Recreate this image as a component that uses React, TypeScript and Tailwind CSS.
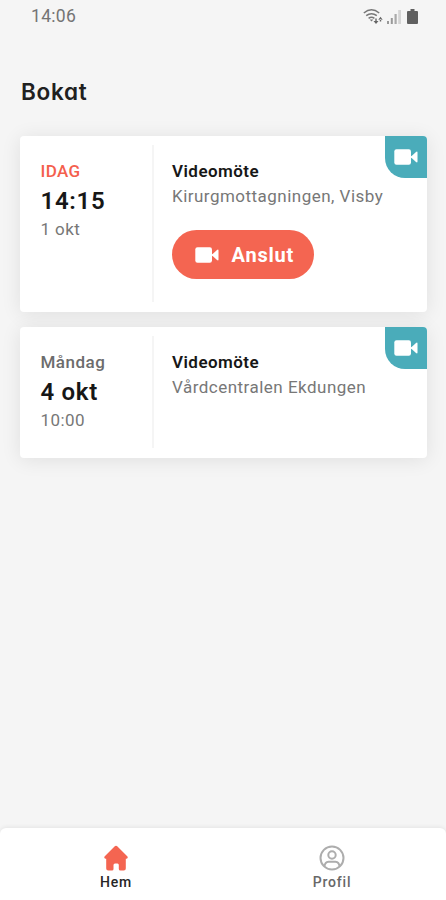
import type { ReactNode } from "react";

function CameraIcon() {
  return (
    <svg viewBox="0 0 24 16" className="h-4 w-6 shrink-0" fill="currentColor">
      <rect x="0.3" y="0.3" width="16.7" height="15.4" rx="2.2" />
      <path d="M17 7.300 18.200 6.500 22 2.900Q23.500 2 23.500 3.500V12.500Q23.500 14 22 13.100L18.200 9.500 17 8.700Z" />
    </svg>
  );
}

function StatusBar() {
  return (
    <div className="flex h-8 items-center justify-between pr-[28px] pl-[31px] text-[#747474]">
      <span className="text-[17.5px] leading-8 tracking-[0.3px]">14:06</span>
      <div className="flex items-center">
        <svg viewBox="0 0 20 17" className="h-[17px] w-5" fill="none" stroke="#777" strokeWidth="1.5">
          <path d="M.8 5Q8.500-1.400 16.200 5M3.200 7.700Q8.500 3.600 13.800 7.700M5.600 10.300Q8.500 8 11.400 10.300" />
          <path d="M6.700 11.500H10.300L8.500 13.500Z" fill="#777" stroke="none" />
          <path d="M10.500 13H15.500L13 16ZM15.300 11.800H19.700L17.500 8.800ZM12.300 10.500H13.700V14H12.300ZM16.800 11H18.200V13.500H16.800Z" fill="#666" stroke="none" />
        </svg>
        <svg viewBox="0 0 15 15" className="ml-[4px] h-[15px] w-[15px]">
          <path d="M0 12h2v3H0ZM3.800 9h2v6h-2Z" fill="#999" />
          <path d="M7.500 5h2.200v10H7.500Z" fill="#aaa" />
          <path d="M11.200 1h2.800v14h-2.800Z" fill="#d5d5d5" />
        </svg>
        <svg viewBox="0 0 11 15" className="ml-[5px] h-[15px] w-[11px]" fill="#606060">
          <path d="M3.500 0h4v2H10q1 0 1 1v11q0 1-1 1H1q-1 0-1-1V3q0-1 1-1h2.500Z" />
        </svg>
      </div>
    </div>
  );
}

type BookingProps = {
  label: string;
  labelClass: string;
  main: string;
  sub: string;
  place: string;
  className: string;
  children?: ReactNode;
};

function Booking({ label, labelClass, main, sub, place, className, children }: BookingProps) {
  return (
    <article className={`relative flex rounded-[4px] bg-white shadow-[0_2px_20px_rgba(0,0,0,0.09)] ${className}`}>
      <div className="mt-[9px] mb-[10px] w-[134px] border-r-2 border-[#f5f5f5] pt-[15px] pl-[20.500px]">
        <p className={`text-[17px] leading-[22px] font-medium ${labelClass}`}>{label}</p>
        <p className="mt-[4px] text-[24px] leading-[30px] font-semibold tracking-[0.7px] text-[#171717]">{main}</p>
        <p className="mt-[2px] text-[17px] leading-[22px] tracking-[0.4px] text-[#777]">{sub}</p>
      </div>
      <div className="pt-[24px] pl-[18px]">
        <h2 className="text-[17px] leading-[22px] font-semibold tracking-[0.45px] text-[#171717]">Videomöte</h2>
        <p className="mt-[3px] text-[17px] leading-[22px] tracking-[0.48px] whitespace-nowrap text-[#777]">{place}</p>
        {children}
      </div>
      <div className="absolute top-0 right-0 flex size-[42px] items-center justify-center rounded-tr-[4px] rounded-bl-[20px] bg-[#4aacba] text-white">
        <CameraIcon />
      </div>
    </article>
  );
}

export default function App() {
  return (
    <div className="flex h-screen w-full flex-col overflow-hidden bg-[#f5f5f5] font-[Roboto,sans-serif]">
      <StatusBar />
      <main className="flex-1 px-5">
        <h1 className="mt-[44px] pl-px font-[Inter,sans-serif] text-[22.500px] leading-8 font-semibold tracking-[0.700px] text-[#202020] [font-feature-settings:'cv11']">
          Bokat
        </h1>
        <div className="mt-[28px] mr-[-1px] space-y-[15px]">
          <Booking
            className="h-[176px]"
            label="IDAG"
            labelClass="text-[#f4604d] tracking-[0.4px]"
            main="14:15"
            sub="1 okt"
            place="Kirurgmottagningen, Visby"
          >
            <button className="mt-[23px] flex h-[49px] w-[142px] items-center rounded-full bg-[#f46551] pl-[22.500px] text-white">
              <CameraIcon />
              <span className="ml-[13px] text-[20px] font-bold tracking-[0.8px]">Anslut</span>
            </button>
          </Booking>
          <Booking
            className="h-[131px]"
            label="Måndag"
            labelClass="text-[#6c6c6c] tracking-[0.5px]"
            main="4 okt"
            sub="10:00"
            place="Vårdcentralen Ekdungen"
          />
        </div>
      </main>
      <nav className="flex h-[72px] rounded-t-[6px] bg-white pl-[8px] shadow-[0_-1px_4px_rgba(0,0,0,0.07)]">
        <a className="flex w-[216px] flex-col items-center pt-[17px] text-[#262626]">
          <svg viewBox="0 0 26 26" className="size-[26px]" fill="#f46551">
            <path d="M11.500 1.400Q13 .1 14.500 1.400L24.500 11.500Q25.500 13.300 23.500 13.700H22.800V23.500Q22.800 25.500 20.800 25.500H17.500Q15.800 25.500 15.800 24V20Q15.800 18.500 14.500 18.500H12Q10.500 18.500 10.500 20V24Q10.500 25.500 9 25.500H5.200Q3.200 25.500 3.200 23.500V13.700H2.500Q.5 13.300 1.500 11.500Z" />
          </svg>
          <span className="mt-[2px] text-[14px] leading-[18px] font-medium tracking-[0.8px]">Hem</span>
        </a>
        <a className="flex w-[216px] flex-col items-center pt-[17px] text-[#686868]">
          <svg viewBox="0 0 26 26" className="size-[26px]" fill="none" stroke="#adadad" strokeWidth="2">
            <circle cx="13" cy="13" r="11.500" />
            <circle cx="13" cy="10" r="3.700" />
            <path d="M5.500 21.200Q6 17.200 9.500 16.800H16.500Q20 17.200 20.500 21.200" />
          </svg>
          <span className="mt-[2px] text-[14px] leading-[18px] font-medium tracking-[0.8px]">Profil</span>
        </a>
      </nav>
    </div>
  );
}
